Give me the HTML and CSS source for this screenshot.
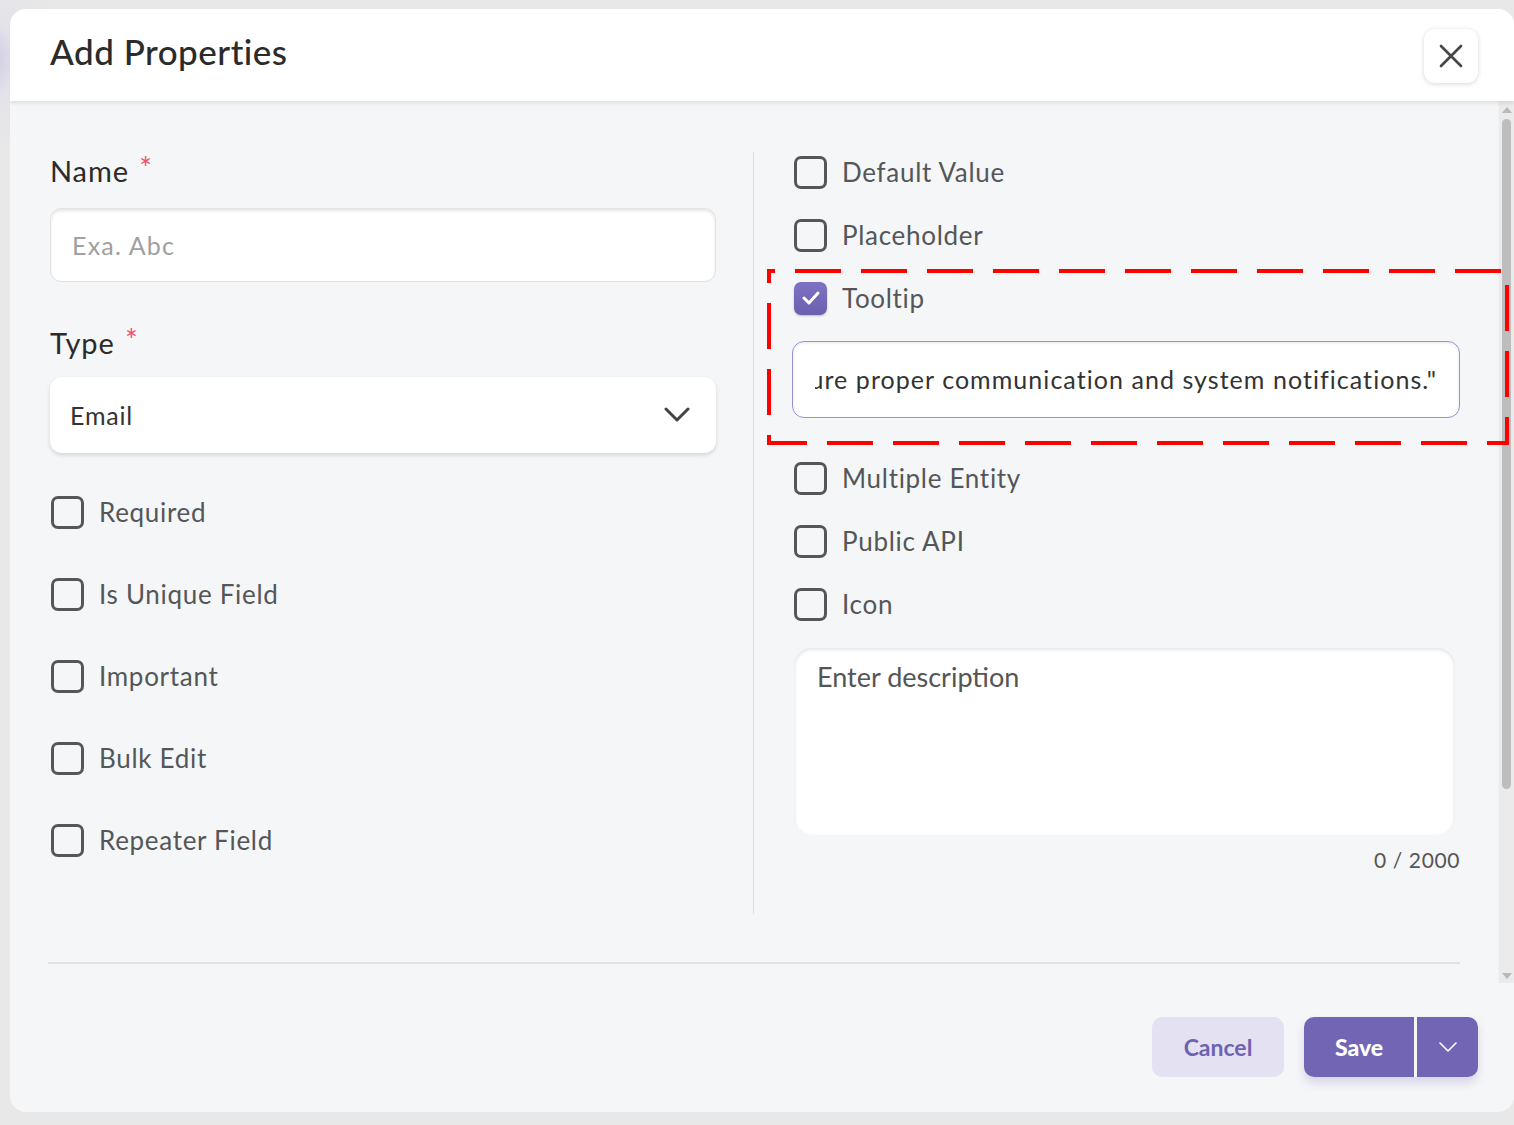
FILE: index.html
```html
<!DOCTYPE html>
<html lang="en">
<head>
<meta charset="utf-8">
<title>Add Properties</title>
<link rel="stylesheet" href="styles.css">
</head>
<body>
<div class="modal">
  <header class="header">
    <h1 class="title">Add Properties</h1>
    <button class="close-btn" aria-label="Close">
      <svg width="24" height="24" viewBox="0 0 24 24"><path d="M2 2 L22 22 M22 2 L2 22" stroke="#454545" stroke-width="2.6" stroke-linecap="round" fill="none"/></svg>
    </button>
  </header>

  <div class="scroll-area">
    <div class="scroll-content">
      <div class="columns">
        <div class="col col-left">
          <label class="field-label">Name <span class="req">*</span></label>
          <div class="text-input"><span class="placeholder">Exa. Abc</span></div>

          <label class="field-label type-label">Type <span class="req">*</span></label>
          <div class="select">
            <span class="select-value">Email</span>
            <svg class="select-chevron" width="26" height="16" viewBox="0 0 26 16"><path d="M2 2 L13 13 L24 2" stroke="#444" stroke-width="3" fill="none" stroke-linecap="round" stroke-linejoin="round"/></svg>
          </div>

          <div class="check-list left-checks">
            <div class="check-row"><span class="box"></span><span class="check-label">Required</span></div>
            <div class="check-row"><span class="box"></span><span class="check-label">Is Unique Field</span></div>
            <div class="check-row"><span class="box"></span><span class="check-label">Important</span></div>
            <div class="check-row"><span class="box"></span><span class="check-label">Bulk Edit</span></div>
            <div class="check-row"><span class="box"></span><span class="check-label">Repeater Field</span></div>
          </div>
        </div>

        <div class="v-divider"></div>

        <div class="col col-right">
          <div class="check-row"><span class="box"></span><span class="check-label">Default Value</span></div>
          <div class="check-row"><span class="box"></span><span class="check-label">Placeholder</span></div>
          <div class="check-row"><span class="box checked"><svg width="20" height="16" viewBox="0 0 20 16"><path d="M3 8 L8 13 L17 3" stroke="#fff" stroke-width="3" fill="none" stroke-linecap="round" stroke-linejoin="round"/></svg></span><span class="check-label">Tooltip</span></div>
          <div class="tooltip-input">
            <div class="tooltip-clip"><span class="tooltip-text">"Enter a valid email address to ensure proper communication and system notifications."</span></div>
          </div>
          <div class="check-row after-input"><span class="box"></span><span class="check-label">Multiple Entity</span></div>
          <div class="check-row"><span class="box"></span><span class="check-label">Public API</span></div>
          <div class="check-row"><span class="box"></span><span class="check-label">Icon</span></div>
          <div class="textarea"><span class="textarea-ph">Enter description</span></div>
          <div class="counter">0 / 2000</div>

          <svg class="annotation" width="744" height="178" viewBox="0 0 744 178"><rect x="2" y="2" width="738" height="172" fill="none" stroke="#ff0000" stroke-width="4" stroke-dasharray="46 20" stroke-dashoffset="-26"/></svg>
        </div>
      </div>
      <div class="h-divider"></div>
    </div>
    <div class="scrollbar">
      <span class="arrow up"></span>
      <div class="track"><div class="thumb"></div></div>
      <span class="arrow down"></span>
    </div>
  </div>

  <footer class="footer">
    <button class="btn btn-cancel">Cancel</button>
    <div class="split-btn">
      <button class="btn btn-save">Save</button>
      <button class="btn btn-drop" aria-label="More">
        <svg width="20" height="12" viewBox="0 0 20 12"><path d="M2 2 L10 10 L18 2" stroke="#fff" stroke-width="1.6" fill="none" stroke-linecap="round" stroke-linejoin="round"/></svg>
      </button>
    </div>
  </footer>
</div>
</body>
</html>
```

FILE: styles.css
```css
* { box-sizing: border-box; }

html, body {
  margin: 0;
  padding: 0;
}

body {
  width: 1514px;
  height: 1125px;
  overflow: hidden;
  background: radial-gradient(circle at -20px 60px, #c9c3e0 0, #e3e2ea 40px, #e8e8e8 90px);
  font-family: "Lato", "Noto Sans", sans-serif;
  color: #333;
}

.modal {
  margin: 9px 0 0 10px;
  width: 1504px;
  height: 1103px;
  border-radius: 16px;
  background: #f5f6f8;
  display: flex;
  flex-direction: column;
  overflow: hidden;
}

/* Header */
.header {
  height: 92px;
  flex: none;
  background: #fff;
  display: flex;
  align-items: center;
  justify-content: space-between;
  padding: 0 36px 0 40px;
  box-shadow: 0 2px 4px rgba(0, 0, 0, 0.10);
  position: relative;
  z-index: 1;
}

.title {
  margin: 0 0 8px 0;
  font-size: 35px;
  font-weight: 500;
  color: #2b2b2b;
  letter-spacing: 0.5px;
}

.close-btn {
  width: 54px;
  height: 54px;
  border: none;
  border-radius: 11px;
  background: #fff;
  box-shadow: 0 1px 5px rgba(0, 0, 0, 0.16);
  display: flex;
  align-items: center;
  justify-content: center;
  padding: 0;
  margin-top: 2px;
}

/* Scroll area */
.scroll-area {
  height: 882px;
  flex: none;
  display: flex;
}

.scroll-content {
  flex: 1;
  padding: 51px 38px 0 40px;
}

.columns {
  display: flex;
  height: 762px;
}

.col {
  display: flex;
  flex-direction: column;
}

.col-left {
  width: 666px;
  margin-right: 37px;
}

.v-divider {
  width: 1px;
  background: #dcdde0;
  flex: none;
}

.col-right {
  width: 668px;
  margin-left: 38px;
  position: relative;
}

.field-label {
  display: block;
  font-size: 29px;
  letter-spacing: 0.9px;
  line-height: 38px;
  height: 38px;
  color: #2b2b2b;
}

.req {
  color: #f0506e;
  font-size: 30px;
  vertical-align: top;
  line-height: 30px;
  margin-left: 2px;
}

.text-input {
  margin-top: 18px;
  height: 74px;
  background: #fff;
  border-radius: 11px;
  border: 1px solid #e2e2e2;
  box-shadow: inset 0 2px 3px rgba(0, 0, 0, 0.10);
  display: flex;
  align-items: center;
  padding: 0 21px;
}

.placeholder {
  font-size: 25px;
  letter-spacing: 1.2px;
  color: #a0a0a0;
}

.type-label {
  margin-top: 42px;
}

.select {
  margin-top: 15px;
  height: 76px;
  background: #fff;
  border-radius: 12px;
  box-shadow: 0 2px 4px rgba(0, 0, 0, 0.14);
  display: flex;
  align-items: center;
  justify-content: space-between;
  padding: 0 26px 0 20px;
}

.select-value {
  font-size: 25px;
  letter-spacing: 0.8px;
  color: #333;
}

.left-checks {
  margin-top: 43px;
  display: flex;
  flex-direction: column;
  gap: 50px;
}

.check-row {
  display: flex;
  align-items: center;
  height: 32px;
  margin-left: 1px;
}

.col-right .check-row {
  margin-left: 2px;
  margin-bottom: 31px;
}

.col-right .check-row:nth-child(1) { margin-top: 4px; }

.box {
  width: 33px;
  height: 33px;
  border: 3px solid #545658;
  border-radius: 7px;
  flex: none;
  display: flex;
  align-items: center;
  justify-content: center;
}

.box.checked {
  border: none;
  background: linear-gradient(180deg, #7f72c4, #6b5fae);
  box-shadow: 0 1px 2px rgba(0, 0, 0, 0.25);
}

.check-label {
  margin-left: 15px;
  font-size: 26px;
  color: #545658;
  letter-spacing: 0.7px;
}

.tooltip-input {
  margin-top: -4px;
  height: 77px;
  border: 1.5px solid #9a90d2;
  border-radius: 12px;
  background: #fff;
  box-shadow: inset 0 1px 3px rgba(0, 0, 0, 0.10);
  display: flex;
  align-items: center;
  padding: 0 22px 2px 22px;
}

.tooltip-clip {
  flex: 1;
  overflow: hidden;
  display: flex;
  justify-content: flex-end;
  white-space: nowrap;
}

.tooltip-text {
  font-size: 25px;
  letter-spacing: 1.05px;
  color: #333;
  flex: none;
}

.check-row.after-input {
  margin-top: 44px;
}

.textarea {
  margin-top: -3px;
  margin-left: 2px;
  width: 661px;
  height: 188px;
  background: #fff;
  border-radius: 18px;
  box-shadow: inset 0 1px 4px rgba(0, 0, 0, 0.14);
  padding: 12px 23px;
}

.textarea-ph {
  font-size: 27px;
  color: #555;
}

.counter {
  margin-top: 12px;
  text-align: right;
  font-size: 21px;
  letter-spacing: 0.6px;
  line-height: 24px;
  color: #555;
}

.annotation {
  position: absolute;
  left: -25px;
  top: 117px;
  pointer-events: none;
}

.h-divider {
  margin: 48px 0 0 -2px;
  width: 1412px;
  height: 2px;
  background: #e2e3e6;
}

/* Scrollbar */
.scrollbar {
  width: 16px;
  flex: none;
  background: #ebebeb;
  border-left: 1px solid #f2f2f2;
  display: flex;
  flex-direction: column;
  align-items: center;
  padding: 6px 0 4px;
}

.arrow {
  width: 0;
  height: 0;
  border-left: 5px solid transparent;
  border-right: 5px solid transparent;
  flex: none;
}

.arrow.up { border-bottom: 6px solid #b8b8b8; }
.arrow.down { border-top: 6px solid #b8b8b8; }

.track {
  flex: 1;
  width: 100%;
  padding: 6px 3px 0 3px;
}

.thumb {
  height: 670px;
  border-radius: 5px;
  background: #bdbdbd;
}

/* Footer */
.footer {
  flex: 1;
  display: flex;
  align-items: center;
  justify-content: flex-end;
  padding: 0 36px 2px 0;
  gap: 20px;
}

.btn {
  border: none;
  font-family: "Lato", "Noto Sans", sans-serif;
  height: 60px;
  border-radius: 10px;
  padding: 0;
}

.btn-cancel {
  width: 132px;
  background: #e4e1f2;
  color: #6e63b0;
  font-size: 23px;
  font-weight: 700;
}

.split-btn {
  display: flex;
  gap: 3px;
  border-radius: 10px;
  box-shadow: 0 6px 10px rgba(114, 101, 179, 0.22);
}

.btn-save {
  width: 110px;
  background: #7265b3;
  color: #fff;
  font-size: 23px;
  font-weight: 900;
  border-radius: 10px 0 0 10px;
}

.btn-drop {
  width: 61px;
  background: #7265b3;
  border-radius: 0 10px 10px 0;
  display: flex;
  align-items: center;
  justify-content: center;
}
```
